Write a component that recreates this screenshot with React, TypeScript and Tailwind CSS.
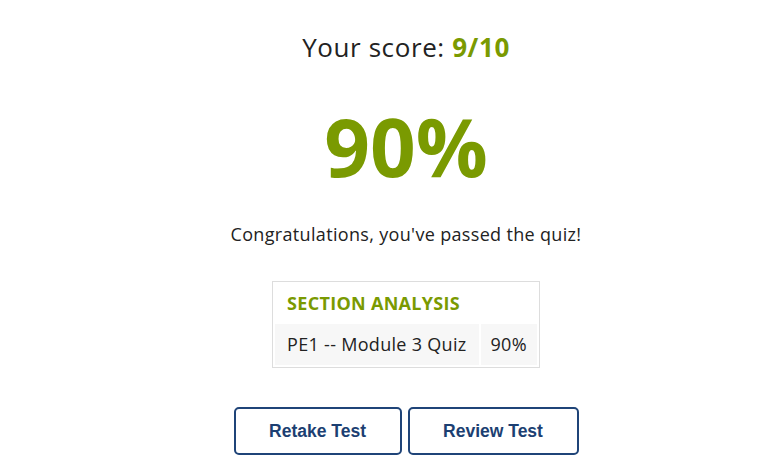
import React from "react";

const green = "text-[#7a9a01]";

export default function App() {
  return (
    <div className="w-[778px] h-[473px] bg-white pl-[34px] font-['Open_Sans',sans-serif] text-[#222]">
      <div className="flex flex-col items-center">
        <div className="mt-[29px] text-[26px] leading-[36px] tracking-[0.6px]">
          Your score: <b className={green}>9/10</b>
        </div>

        <div className={`mt-[33px] text-[80px] font-bold leading-[96px] ${green}`}>90%</div>

        <div className="mt-[27px] text-[18px] leading-[26px] tracking-[0.33px]">
          Congratulations, you've passed the quiz!
        </div>

        <table className="mt-[34px] border border-[#ddd] border-separate border-spacing-[2px] text-[18px] tracking-[0.3px]">
          <tbody>
            <tr>
              <td colSpan={2} className={`px-[12px] pt-[6px] pb-[5px] font-bold text-left ${green}`}>
                SECTION ANALYSIS
              </td>
            </tr>
            <tr>
              <td className="bg-[#f7f7f7] px-[12px] py-[7px]">PE1 -- Module 3 Quiz</td>
              <td className="bg-[#f7f7f7] px-[10px] py-[7px]">90%</td>
            </tr>
          </tbody>
        </table>

        <div className="mt-[39px] flex gap-[6px] font-['Liberation_Sans',Arial,sans-serif] font-bold text-[17.5px] text-[#1c3f72]">
          <button className="w-[168px] h-[48px] rounded-[5px] border-2 border-[#1f4478] bg-white">
            Retake Test
          </button>
          <button className="w-[171px] h-[48px] rounded-[5px] border-2 border-[#1f4478] bg-white">
            Review Test
          </button>
        </div>
      </div>
    </div>
  );
}
